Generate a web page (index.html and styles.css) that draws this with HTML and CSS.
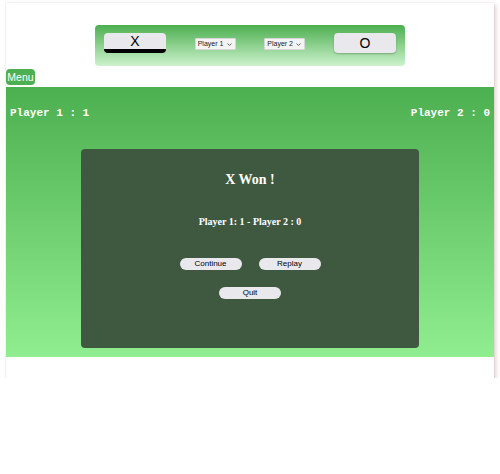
FILE: index.html
```html
<!DOCTYPE html>
<html>
<head>
<meta charset="utf-8">
<link rel="stylesheet" href="styles.css">
</head>
<body>
<div class="app">
  <div class="topbar">
    <button class="side side-active">X</button>
    <span class="pick-wrap">
      <select class="pick"><option>Player 1</option></select>
      <svg class="chev" width="5" height="3" viewBox="0 0 5 3"><path d="M0.5 0.5 L2.5 2.5 L4.5 0.5" fill="none" stroke="#555" stroke-width="0.9"/></svg>
    </span>
    <span class="pick-wrap">
      <select class="pick"><option>Player 2</option></select>
      <svg class="chev" width="5" height="3" viewBox="0 0 5 3"><path d="M0.5 0.5 L2.5 2.5 L4.5 0.5" fill="none" stroke="#555" stroke-width="0.9"/></svg>
    </span>
    <button class="side">O</button>
  </div>
  <div class="menu-row"><button class="menu">Menu</button></div>
  <div class="board">
    <div class="scores">
      <span>Player 1 : 1</span>
      <span>Player 2 : 0</span>
    </div>
    <div class="modal">
      <h2 class="title">X Won !</h2>
      <p class="summary">Player 1: 1 - Player 2 : 0</p>
      <div class="actions">
        <button class="pill">Continue</button>
        <button class="pill">Replay</button>
      </div>
      <div class="actions actions-last">
        <button class="pill">Quit</button>
      </div>
    </div>
  </div>
  <div class="footer"></div>
</div>
</body>
</html>
```
FILE: styles.css
```css
html, body {
  margin: 0;
  padding: 0;
  background: #ffffff;
}
body {
  font-family: "Liberation Sans", Arial, sans-serif;
}
.app {
  margin: 3px 6px 0 6px;
  width: 488px;
  background: #ffffff;
  box-shadow: 2px 2px 4px rgba(190, 140, 140, 0.4), 0 0 1px rgba(190, 140, 140, 0.5);
  padding-top: 22px;
}
.topbar {
  width: 310px;
  box-sizing: border-box;
  margin: 0 auto;
  height: 41px;
  padding: 8px 9px 0 9px;
  display: flex;
  align-items: flex-start;
  justify-content: space-between;
  border-radius: 4px;
  background: linear-gradient(to bottom, #4caf50, #cdf2cd);
}
.side {
  width: 62px;
  height: 20px;
  box-sizing: border-box;
  border: none;
  border-radius: 4px;
  background: #e9e9ed;
  font-family: "Liberation Sans", Arial, sans-serif;
  font-size: 14px;
  line-height: 16px;
  color: #000;
  padding: 0;
  box-shadow: 0 1px 2px rgba(0, 0, 0, 0.25);
}
.side-active {
  border-bottom: 4px solid #000;
  box-shadow: none;
}
.pick-wrap {
  position: relative;
  margin-top: 5px;
  width: 41px;
  height: 12px;
  display: block;
}
.pick {
  -webkit-appearance: none;
  appearance: none;
  display: block;
  width: 41px;
  height: 12px;
  box-sizing: border-box;
  font-family: "Liberation Sans", Arial, sans-serif;
  font-size: 7px;
  line-height: 10px;
  padding: 0 0 0 2px;
  margin: 0;
  border: 1px solid #d6d6d6;
  border-radius: 1px;
  background: #f4f4f4;
  color: #222;
}
.chev {
  position: absolute;
  right: 4px;
  top: 5px;
  pointer-events: none;
}
.menu-row {
  margin-top: 3px;
  display: flex;
}
.menu {
  height: 16px;
  width: 29px;
  padding: 0;
  border: none;
  border-radius: 4px;
  background: #4caf50;
  color: #fff;
  font-family: "Liberation Sans", Arial, sans-serif;
  font-size: 10.5px;
}
.board {
  margin-top: 2px;
  height: 270px;
  box-sizing: border-box;
  background: linear-gradient(to bottom, #4caf50, #90ee90);
  padding-top: 20px;
}
.scores {
  display: flex;
  justify-content: space-between;
  padding: 0 4px;
  font-family: "Liberation Mono", "Courier New", monospace;
  font-weight: bold;
  font-size: 11px;
  line-height: 13px;
  color: #fff;
}
.modal {
  margin: 29px auto 0 auto;
  width: 338px;
  height: 199px;
  box-sizing: border-box;
  background: #3f5941;
  border-radius: 4px;
  padding-top: 23px;
  display: flex;
  flex-direction: column;
  align-items: center;
  color: #fff;
  font-family: "Liberation Serif", "Times New Roman", serif;
}
.title {
  margin: 0;
  font-size: 14px;
  line-height: 16px;
  font-weight: bold;
}
.summary {
  margin: 28px 0 0 0;
  font-size: 10px;
  line-height: 12px;
  font-weight: bold;
}
.actions {
  margin-top: 30px;
  display: flex;
  gap: 17px;
}
.actions-last {
  margin-top: 17px;
}
.pill {
  width: 62px;
  height: 12px;
  padding: 0;
  border: none;
  border-radius: 6px;
  background: #e9e9ed;
  color: #000;
  font-family: "Liberation Sans", Arial, sans-serif;
  font-size: 8px;
  line-height: 12px;
}
.footer {
  height: 21px;
}
```
